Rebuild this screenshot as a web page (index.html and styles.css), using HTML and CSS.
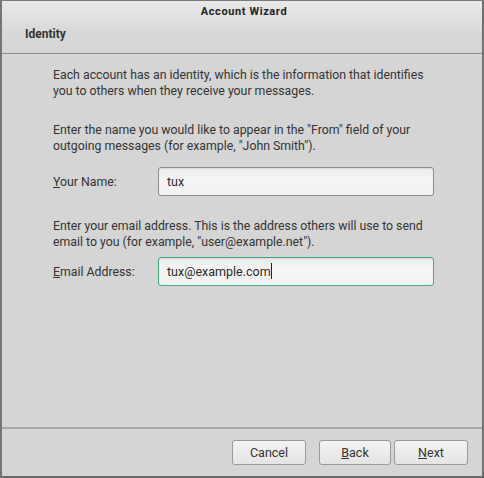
FILE: index.html
```html
<!DOCTYPE html>
<html>
<head>
<meta charset="utf-8">
<link rel="stylesheet" href="styles.css">
</head>
<body>
<div class="window">
  <div class="head">
    <div class="title">Account Wizard</div>
    <div class="page-title">Identity</div>
  </div>
  <div class="content">
    <p class="para">Each account has an identity, which is the information that identifies you to others when they receive your messages.</p>
    <p class="para gap">Enter the name you would like to appear in the "From" field of your outgoing messages (for example, "John Smith").</p>
    <div class="row">
      <label class="label"><u>Y</u>our Name:</label>
      <div class="input">tux</div>
    </div>
    <p class="para gap2">Enter your email address. This is the address others will use to send email to you (for example, "user@example.net").</p>
    <div class="row row2">
      <label class="label"><u>E</u>mail Address:</label>
      <div class="input focus">tux@example.com<span class="caret"></span></div>
    </div>
  </div>
  <div class="sep"></div>
  <div class="footer">
    <button class="btn">Cancel</button>
    <button class="btn back"><u>B</u>ack</button>
    <button class="btn next"><u>N</u>ext</button>
  </div>
</div>
</body>
</html>
```
FILE: styles.css
```css
html, body {
  margin: 0;
  padding: 0;
  background: #d5d5d5;
}
body {
  width: 484px;
  height: 478px;
  overflow: hidden;
  font-family: Roboto, "Liberation Sans", sans-serif;
  color: #333;
}
.window {
  box-sizing: border-box;
  width: 484px;
  height: 478px;
  border-top: 1px solid #7a7a7a;
  border-left: 2px solid #757575;
  border-right: 2px solid #6f6f6f;
  border-bottom: 2px solid #6a6a6a;
  background: #d5d5d5;
  display: flex;
  flex-direction: column;
}
.head {
  height: 52px;
  border-bottom: 1px solid #8e8e8e;
  background: linear-gradient(#e9e9e9, #d8d8d8 60%, #d5d5d5);
  display: flex;
  flex-direction: column;
}
.title {
  height: 21px;
  line-height: 21px;
  text-align: center;
  font-weight: bold;
  font-size: 11px;
  letter-spacing: 0.6px;
  color: #222;
  padding-left: 4px;
}
.page-title {
  padding-left: 23px;
  margin-top: 5px;
  font-weight: bold;
  font-size: 12px;
  color: #333;
}
.content {
  flex: 1;
  padding: 13px 40px 0 51px;
}
.para {
  margin: 0;
  font-size: 12.3px;
  line-height: 16px;
}
.gap { margin-top: 23px; }
.gap2 { margin-top: 22px; }
.row {
  display: flex;
  align-items: center;
  margin-top: 13px;
}
.row2 { margin-top: 7px; }
.label {
  width: 105px;
  font-size: 12.3px;
}
.input {
  box-sizing: border-box;
  width: 276px;
  height: 29px;
  border: 1px solid #8d8d8d;
  border-radius: 3px;
  background: linear-gradient(#ececec, #f6f6f6 40%, #f1f1f1);
  box-shadow: inset 0 1px 1px rgba(0,0,0,0.08);
  font-size: 12.5px;
  line-height: 27px;
  padding-left: 8px;
  color: #2a2a2a;
}
.focus {
  border-color: #3fae78;
}
.caret {
  display: inline-block;
  width: 1px;
  height: 16px;
  background: #222;
  vertical-align: -3px;
  margin-left: 0;
}
.sep {
  height: 2px;
  background: #a9a9a9;
}
.footer {
  height: 47px;
  display: flex;
  justify-content: flex-end;
  align-items: flex-start;
  padding: 11px 14px 0 0;
  box-sizing: border-box;
}
.btn {
  box-sizing: border-box;
  width: 74px;
  height: 25px;
  border: 1px solid #9a9a9a;
  border-radius: 3px;
  background: linear-gradient(#f3f3f3, #e4e4e4);
  font-family: Roboto, "Liberation Sans", sans-serif;
  font-size: 12.5px;
  color: #333;
  padding: 0;
  margin: 0;
}
.back { margin-left: 13px; width: 72px; }
.next { margin-left: 3px; }
```
